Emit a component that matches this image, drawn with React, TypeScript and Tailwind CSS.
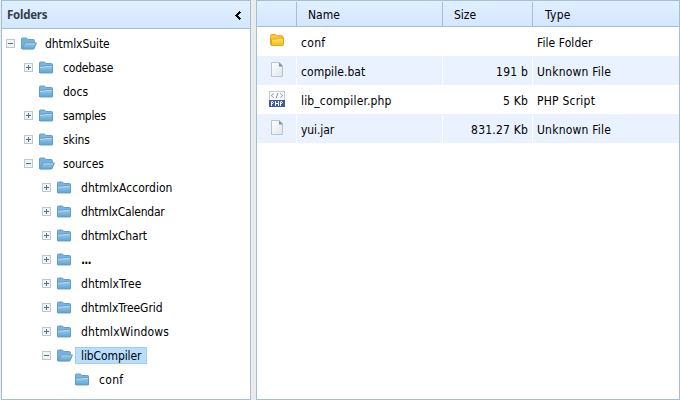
import React from "react";

type Node = { name: string; level: number; toggle?: "plus" | "minus"; open?: boolean; selected?: boolean; tracking?: string };

const nodes: Node[] = [
  { name: "dhtmlxSuite", level: 0, toggle: "minus", open: true, tracking: "tracking-[-0.07px]" },
  { name: "codebase", level: 1, toggle: "plus", tracking: "tracking-[-0.2px]" },
  { name: "docs", level: 1 },
  { name: "samples", level: 1, toggle: "plus", tracking: "tracking-[-0.3px]" },
  { name: "skins", level: 1, toggle: "plus", tracking: "tracking-[-0.1px]" },
  { name: "sources", level: 1, toggle: "minus", open: true, tracking: "tracking-[-0.1px]" },
  { name: "dhtmlxAccordion", level: 2, toggle: "plus", tracking: "tracking-[0.03px]" },
  { name: "dhtmlxCalendar", level: 2, toggle: "plus", tracking: "tracking-[-0.2px]" },
  { name: "dhtmlxChart", level: 2, toggle: "plus", tracking: "tracking-[-0.15px]" },
  { name: "...", level: 2, toggle: "plus", tracking: "font-bold tracking-[-0.8px]" },
  { name: "dhtmlxTree", level: 2, toggle: "plus", tracking: "tracking-[0.02px]" },
  { name: "dhtmlxTreeGrid", level: 2, toggle: "plus", tracking: "tracking-[-0.1px]" },
  { name: "dhtmlxWindows", level: 2, toggle: "plus", tracking: "tracking-[0.15px]" },
  { name: "libCompiler", level: 2, toggle: "minus", open: true, selected: true, tracking: "tracking-[-0.1px]" },
  { name: "conf", level: 3, tracking: "tracking-[0.3px]" },
];

const indents = ["pl-0.5", "pl-5", "pl-[38px]", "pl-14"];

const files = [
  { icon: "folder", name: "conf", size: "", type: "File Folder", tracking: "tracking-[0.3px]", typeTracking: "tracking-[0.08px]" },
  { icon: "file", name: "compile.bat", size: "191 b", type: "Unknown File", tracking: "tracking-[0.05px]", typeTracking: "tracking-[0.22px]" },
  { icon: "php", name: "lib_compiler.php", size: "5 Kb", type: "PHP Script", tracking: "tracking-[0.15px]", typeTracking: "tracking-[0.22px]" },
  { icon: "file", name: "yui.jar", size: "831.27 Kb", type: "Unknown File", tracking: "tracking-[-0.1px]", typeTracking: "tracking-[0.22px]" },
];

function Toggle({ kind }: { kind?: "plus" | "minus" }) {
  return (
    <svg className="ml-0.5 mr-1.5 shrink-0" width="9" height="9" shapeRendering="crispEdges">
      {kind && (
        <>
          <rect x="0.5" y="0.5" width="8" height="8" fill="#f0f4f5" stroke="#bcc8cd" />
          <path d="M2 4.5h5" stroke="#56707d" />
          {kind === "plus" && <path d="M4.5 2v5" stroke="#56707d" />}
        </>
      )}
    </svg>
  );
}

function TreeFolder({ open }: { open?: boolean }) {
  return (
    <svg className="mr-2 shrink-0" width="16" height="13" viewBox="0 0 16 13">
      <defs>
        <linearGradient id="blueFront" x1="0" y1="0" x2="0" y2="1">
          <stop offset="0" stopColor="#9acae7" />
          <stop offset="1" stopColor="#5fa3d2" />
        </linearGradient>
      </defs>
      {open ? (
        <>
          <path d="M.5 11.5V2Q.5 1 1.5 1h4l1.5 1.5h5.5q.8 0 .8.8V6L3 11.5z" fill="#77b2da" stroke="#649fcb" />
          <path d="M4 6h11.4L13 11.7q-.2.4-.8.4H1.5q-.8 0-.5-.6z" fill="url(#blueFront)" stroke="#5c9ac8" />
          <path d="M4.3 6.8h9.6" stroke="#b5daef" strokeWidth=".7" />
        </>
      ) : (
        <>
          <path d="M.5 11.5V2Q.5 1 1.5 1h4L7 2.5h5.6q.9 0 .9.9v8z" fill="#7ab5dc" stroke="#649fcb" />
          <path d="M.5 5.5h5l1-.7h7v6.4q0 .8-.8.8H1.3q-.8 0-.8-.8z" fill="url(#blueFront)" />
          <path d="M.5 5.2h5l1-.7h7" fill="none" stroke="#5c9ac8" strokeWidth=".8" />
          <path d="M1 6.2h4.7l1-.7H13" fill="none" stroke="#b5daef" strokeWidth=".8" />
          <path d="M.5 5v6q0 1 .8 1h11.4q.8 0 .8-.8V5" fill="none" stroke="#5998c8" strokeWidth=".9" />
        </>
      )}
    </svg>
  );
}

function FileIcon({ kind }: { kind: string }) {
  if (kind === "folder")
    return (
      <svg className="-mt-px" width="16" height="16" viewBox="0 0 16 16">
        <defs>
          <linearGradient id="gold" x1="0" y1="0" x2="0" y2="1">
            <stop offset="0" stopColor="#ffe36c" />
            <stop offset="1" stopColor="#fdbd0c" />
          </linearGradient>
        </defs>
        <path d="M1.5 12.5v-8q0-2 1.5-2h3q1 0 1.5 1.2h5.2q1.3 0 1.3 1.3v7.5z" fill="#fccb38" stroke="#e0a326" />
        <path d="M2.5 13.5V8q0-1 1-1h3.3q.7 0 1.1-.5.4-.5 1.1-.5h5.5v6.4q0 1.1-1.2 1.1z" fill="url(#gold)" stroke="#e0a326" />
      </svg>
    );
  if (kind === "php")
    return (
      <svg width="16" height="16" viewBox="0 0 16 16">
        <rect x=".5" y=".5" width="15" height="15" fill="#fafafa" stroke="#c5cbd1" />
        <path d="M4.7 2.5 2.3 4.7l2.4 2.1M11.3 2.5l2.4 2.2-2.4 2.1M9 2 7 7.3" fill="none" stroke="#87929c" />
        <path d="M0 9h16v7H0z" fill="#4058a0" />
        <path
          d="M2.5 15v-4.5M3 10.5h1M3 12.5h1M4.5 11v1M6.5 10v5M9.5 10v5M7 12.5h2M11.5 15v-4.5M12 10.5h1M12 12.5h1M13.5 11v1"
          fill="none"
          stroke="#fff"
        />
      </svg>
    );
  return (
    <svg width="16" height="16" viewBox="0 0 16 16">
      <defs>
        <linearGradient id="paper" x1="0" y1="0" x2="1" y2="1">
          <stop offset="0" stopColor="#ffffff" />
          <stop offset="1" stopColor="#dde6e9" />
        </linearGradient>
      </defs>
      <path d="M2.5.5h8l3 3v11h-11z" fill="url(#paper)" stroke="#b9c5cb" />
      <path d="M10 .5v4h4z" fill="#7f929d" />
    </svg>
  );
}

export default function App() {
  return (
    <div className="flex h-[400px] w-[680px] gap-[5px] overflow-hidden bg-[#ebebeb] pl-px font-['DejaVu_Sans_Condensed','DejaVu_Sans',sans-serif] text-[12px] text-black">
      <aside className="flex w-[250px] shrink-0 flex-col border border-[#a4bed4] bg-white">
        <header className="flex h-7 shrink-0 items-center justify-between border-b border-[#a4bed4] bg-linear-to-b from-[#e2efff] to-[#d3e7ff] pl-[5px] pr-[9px]">
          <span className="pt-px font-['Noto_Sans',sans-serif] text-[11.5px] font-bold tracking-[-0.25px] text-[#34404b]">Folders</span>
          <svg width="6" height="9" shapeRendering="crispEdges" className="mt-0.5">
            <path d="M4 0h1v1h1v1h-1v1h-1v1h-1v1h1v1h1v1h1v1h-1v1h-1v-1h-1v-1h-1v-1h-1v-1h-1v-1h1v-1h1v-1h1v-1h1z" />
          </svg>
        </header>
        <ul className="pt-0.5">
          {nodes.map((node) => (
            <li key={node.name + node.level} className={`flex h-6 items-center ${indents[node.level]}`}>
              <Toggle kind={node.toggle} />
              <TreeFolder open={node.open} />
              <span
                className={`${node.tracking ?? ""} ${
                  node.selected
                    ? "-ml-1.5 h-[17px] w-[72px] border border-[#a4cdec] bg-[#b5deff] px-[5px] leading-[17px]"
                    : "pt-px leading-[18px]"
                }`}
              >
                {node.name}
              </span>
            </li>
          ))}
        </ul>
      </aside>
      <main className="flex grow flex-col border border-[#a4bed4] bg-white">
        <header className="grid h-[26px] shrink-0 grid-cols-[40px_146px_90px_1fr] border-b border-[#a4bed4] bg-linear-to-b from-[#e2efff] to-[#d3e7ff] pt-px leading-[27px]">
          <span className="border-r border-[#a4bed4]" />
          <span className="border-r border-[#a4bed4] pl-[11px]">Name</span>
          <span className="border-r border-[#a4bed4] pl-[11px]">Size</span>
          <span className="pl-3 tracking-[0.3px]">Type</span>
        </header>
        {files.map((file) => (
          <div key={file.name} className="grid h-[29px] grid-cols-[40px_146px_90px_1fr] py-px leading-[31px] even:bg-white odd:bg-[#eaf2ff]">
            <span className="flex justify-center border-r border-white pt-[5px]">
              <FileIcon kind={file.icon} />
            </span>
            <span className={`border-r border-white pl-1 ${file.tracking}`}>{file.name}</span>
            <span className="border-r border-white pr-1 text-right tracking-[0.2px]">{file.size}</span>
            <span className={`pl-1 ${file.typeTracking}`}>{file.type}</span>
          </div>
        ))}
      </main>
    </div>
  );
}
